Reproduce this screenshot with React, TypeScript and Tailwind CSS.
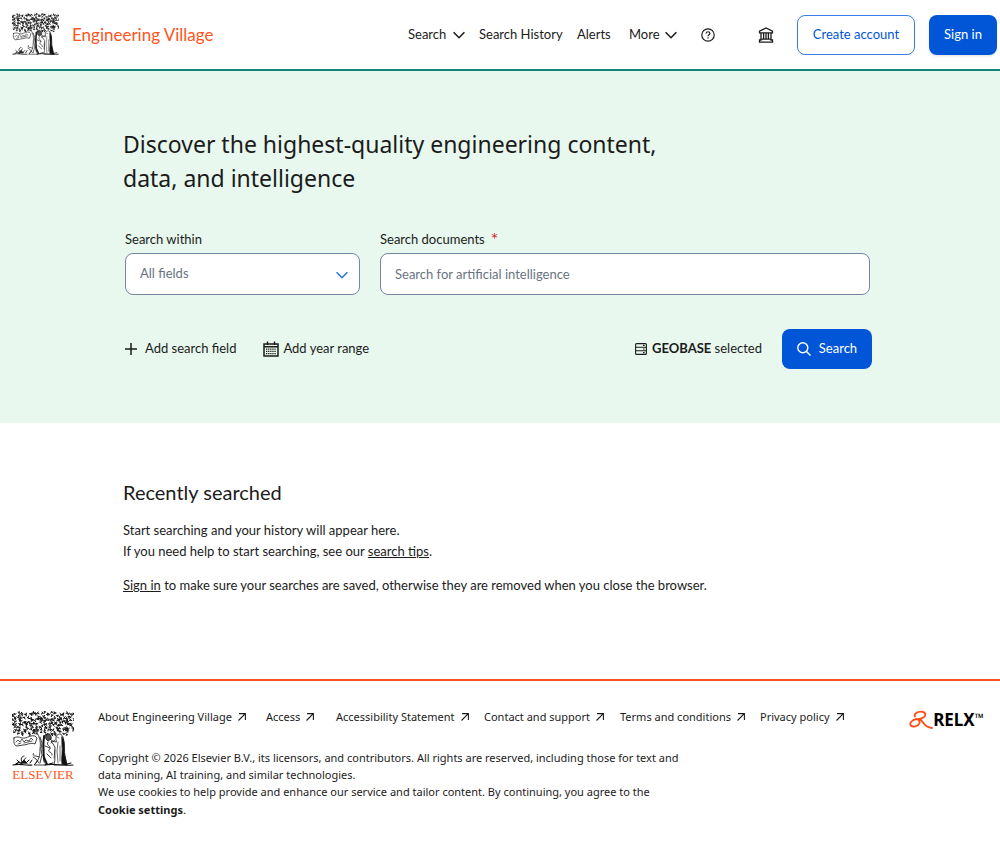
import type { ReactNode } from "react";

const footerLinks = [
  { label: "About Engineering Village", width: "w-[168px]" },
  { label: "Access", width: "w-[70px]" },
  { label: "Accessibility Statement", width: "w-[148px]" },
  { label: "Contact and support", width: "w-[136px]" },
  { label: "Terms and conditions", width: "w-[140px]" },
  { label: "Privacy policy", width: "w-[86px]" },
];

// small curled leaves scattered over the crown of the tree
function leafPath() {
  let seed = 7;
  const next = () => {
    seed = (seed * 16807) % 2147483647;
    return seed / 2147483647;
  };
  let d = "";
  for (let row = 0; row < 9; row++) {
    for (let col = 0; col < 20; col++) {
      const x = 1.5 + col * 3.1 + next() * 1.6 - 0.8;
      const y = 2.5 + row * 2.5 + next() * 1.6 - 0.8;
      if (row > 7 && (col > 17 || col < 2)) continue;
      const a = next() * Math.PI * 2;
      const dx = Math.cos(a) * 1.8;
      const dy = Math.sin(a) * 1.8;
      d += `M${x.toFixed(1)} ${y.toFixed(1)}q${(dx + dy).toFixed(1)} ${(dy - dx).toFixed(1)} ${dx.toFixed(1)} ${dy.toFixed(1)}t${(dy * 0.8).toFixed(1)} ${(-dx * 0.8).toFixed(1)}`;
    }
  }
  return d;
}

const leaves = leafPath();

function Tree({ className }: { className: string }) {
  return (
    <svg viewBox="0 0 62 56" className={className} fill="none" stroke="#111" strokeLinecap="round" aria-hidden="true">
      <path d={leaves} strokeWidth="1" />
      {/* banner */}
      <path d="M2 27c4-3 7 1 11 0s6-3 10-2l2 2-2 6c-4-2-8 1-12 1l-6 1c-4-1-3-5-3-8Z" fill="#fff" strokeWidth="0.8" />
      <path d="M4 31l2-2 2 2 2-3 2 3 2-2 3 1 2-3 2 2M6 33l3-1M12 32l8-2" strokeWidth="0.7" />
      {/* trunk and vine */}
      <path d="M25 22c3 5 4 9 3 16 0 6-1 12-6 16h12c-2-4-3-8-2-14 0-7-1-12 2-18" fill="#fff" strokeWidth="0.8" />
      <path d="M28 26l2 6-1 6 1 6-2 8M31 44l1 7M22 43c-2-2-1 3 2 2l3 1M21 46l3 2 3 4M25 50l-2 3" strokeWidth="0.8" />
      <path d="M32 25c-1 8-1 15 0 21l3 7" strokeWidth="1.8" />
      <path d="M34 24c3-3 6 0 5 4l-3 2c-2-1-3-3-2-6Z" fill="#555" strokeWidth="0.8" />
      <path d="M36 31c-3 4 5 4 1 8-2 2 4 2 3 5M33 35l5 2M38 28l4 3M39 32l4-3M35 43l4 4" strokeWidth="0.8" />
      {/* old man in his robe */}
      <path d="M44 28c-1-5 5-7 7-2 2 6 1 14 2 20l2 8H42c2-7 0-12 1-18l-4-6 5 1Z" fill="#fff" strokeWidth="0.8" />
      <path d="M50 26c3 4 2 10 2 15l3 13-5-1c-1-6 1-13 0-19Z" fill="#111" strokeWidth="0.8" />
      <path d="M46 31l-1 9 1 12M48 35v15M43 39l-1 8M45 26l2 1" strokeWidth="0.6" />
      {/* ground and shrubs */}
      <path d="M1 54c7-2 12 1 19 0M33 54c8-2 16 1 28 0M4 53l3-2 3 2M55 53l4-1M37 53l4-1" strokeWidth="1.1" />
      <path d="M10 51c-2-3 0-6 2-6M12 51c-1-3 1-3 2-4M7 51l-2-2M14 52l3-3M18 52l2-3" strokeWidth="1" />
      <path d="M9 52l3-3 3 3Z" fill="#111" strokeWidth="0.8" />
    </svg>
  );
}

function Chevron({ className }: { className: string }) {
  return (
    <svg viewBox="0 0 12 12" className={className} fill="none" stroke="currentColor" strokeWidth="1.6" aria-hidden="true">
      <path d="M.6 3.3 6 8.7l5.4-5.4" />
    </svg>
  );
}

function ArrowOut() {
  return (
    <svg viewBox="0 0 8 8" className="size-2 shrink-0" fill="none" stroke="currentColor" strokeWidth="1.1" aria-hidden="true">
      <path d="M.5 7.5l6.8-6.8M1 .6h6.4V7" />
    </svg>
  );
}

function HelpIcon() {
  return (
    <svg viewBox="0 0 14 14" className="size-3.5" fill="none" stroke="currentColor" strokeWidth="1.2" aria-hidden="true">
      <circle cx="7" cy="7" r="6.2" />
      <path d="M5.2 5.5c0-2.4 3.7-2.3 3.7 0C8.9 6.9 7 6.8 7 8.3M7 9.3v1.3" />
    </svg>
  );
}

function InstitutionIcon() {
  return (
    <svg viewBox="0 0 16 16" className="size-4" fill="none" stroke="currentColor" strokeWidth="1.3" aria-hidden="true">
      <path d="M1.5 5.8V4.2L8 1l6.5 3.2v1.6ZM3 6v6.5M5.6 6v6.5M8 6v6.5M10.4 6v6.5M13 6v6.5M1.5 15.2V13H3v-.8h10v.8h1.5v2.2Z" />
    </svg>
  );
}

function CalendarIcon() {
  return (
    <svg viewBox="0 0 16 16" className="size-4" fill="none" stroke="currentColor" aria-hidden="true">
      <path d="M1 3h14v12H1ZM1 5.8h14" strokeWidth="1.5" />
      <path d="M4.5 .5v3.5M11.5 .5v3.5" strokeWidth="1.5" />
      <path d="M3 8.2h10M3 10.4h10M3 12.6h10" strokeWidth="1.3" strokeDasharray="1.3 .8" />
    </svg>
  );
}

function DatabaseIcon() {
  return (
    <svg viewBox="0 0 12 12" className="size-3" fill="none" stroke="currentColor" strokeWidth="1.1" aria-hidden="true">
      <rect x=".6" y=".6" width="10.8" height="10.8" rx="1" />
      <path d="M.6 4.2h10.8M.6 7.8h10.8M8 2.4h1.6M8 6h1.6M8 9.6h1.6" />
    </svg>
  );
}

function RelxLogo() {
  return (
    <a href="#" aria-label="RELX" className="mt-0.5 flex items-center text-black">
      <svg viewBox="0 0 24 20" className="h-5 w-6" fill="none" stroke="#ff4a14" strokeWidth="1.8" strokeLinecap="round" aria-hidden="true">
        <path d="M6 6.500C4.500 4 8 1.700 12 1.700c5 0 5.500 4 2.500 5.800-2 1.300-4.500 1.700-7 1.500C3.500 9.500 0 13 1.800 15.500c2 2 7.500 1 8.700-2.500.5-1.800-.8-3.200-3-4" />
        <path d="M10 9c5 1 3.500 8.500 13 9" />
      </svg>
      <span className="font-['Noto_Sans',sans-serif] text-[17px] leading-5 font-bold">RELX</span>
      <span className="self-start text-xs leading-4 font-bold">™</span>
    </a>
  );
}

function NavButton({ children }: { children: ReactNode }) {
  return (
    <button type="button" className="flex items-center justify-between">
      {children}
      <Chevron className="size-3" />
    </button>
  );
}

function Header() {
  return (
    <header className="flex h-[71px] items-center border-b-2 border-[#168474] pr-[3px] pl-3 whitespace-nowrap">
      <a href="#" className="flex items-center gap-[13px] text-[17px] text-[#ff5420]">
        <Tree className="h-[43px] w-[47px]" />
        Engineering Village
      </a>
      <nav className="ml-auto flex items-center text-[13px]">
        <div className="grid w-[71px] pr-3.5"><NavButton>Search</NavButton></div>
        <a href="#" className="w-[98px]">Search History</a>
        <a href="#" className="w-[52px]">Alerts</a>
        <div className="grid w-[72px] pr-6"><NavButton>More</NavButton></div>
      </nav>
      <button type="button" aria-label="Help"><HelpIcon /></button>
      <button type="button" aria-label="Institution" className="mr-[23px] ml-[43px]"><InstitutionIcon /></button>
      <button type="button" className="h-10 w-[118px] rounded-lg border border-[#3a7de8] text-[13px] text-[#0056d6]">
        Create account
      </button>
      <button type="button" className="ml-3.5 h-10 w-[68px] rounded-lg bg-[#0056d6] text-[13px] text-white shadow">
        Sign in
      </button>
    </header>
  );
}

function Hero() {
  return (
    <section className="bg-[#e8f8ee] pt-14 pb-[54px]">
      <div className="mx-auto max-w-[754px]">
        <h1 className="font-['Noto_Sans',sans-serif] text-[23px] leading-[34px]">
          Discover the highest-quality engineering content,
          <br />
          data, and intelligence
        </h1>
        <form className="mt-8 pr-[5px] pl-0.5" onSubmit={(e) => e.preventDefault()}>
          <div className="flex gap-5 pr-0.5">
            <div className="w-[235px]">
              <label htmlFor="field" className="flex h-6 text-[13px] leading-6">Search within</label>
              <div className="relative mt-0.5">
                <select id="field" className="h-[42px] w-full appearance-none rounded-lg border border-[#7587a0] bg-white px-3.5 text-[13px] text-[#68737f]">
                  <option>All fields</option>
                </select>
                <Chevron className="pointer-events-none absolute top-4 right-3 size-3 text-[#2876e8]" />
              </div>
            </div>
            <div className="flex-1">
              <label htmlFor="query" className="flex h-6 gap-1.5 text-[13px] leading-6">
                Search documents <span className="text-lg leading-6 text-[#d42b38]">*</span>
              </label>
              <input id="query" type="text" placeholder="Search for artificial intelligence" className="mt-0.5 block h-[42px] w-full rounded-lg border border-[#7587a0] bg-white px-3.5 text-[13px] placeholder:text-[#68737f]" />
            </div>
          </div>
          <div className="mt-[34px] flex items-center text-[13px]">
            <button type="button" className="flex items-center gap-2">
              <svg viewBox="0 0 12 12" className="size-3" stroke="currentColor" strokeWidth="1.5" aria-hidden="true">
                <path d="M6 0v12M0 6h12" />
              </svg>
              Add search field
            </button>
            <button type="button" className="ml-[27px] flex items-center gap-1">
              <CalendarIcon />
              Add year range
            </button>
            <button type="button" className="ml-auto flex items-center gap-[5px]">
              <DatabaseIcon />
              <span><b>GEOBASE</b> selected</span>
            </button>
            <button type="submit" className="ml-5 flex h-10 w-[90px] items-center justify-center gap-2 rounded-lg bg-[#0056d6] text-white">
              <svg viewBox="0 0 14 14" className="size-3.5" fill="none" stroke="currentColor" strokeWidth="1.4" aria-hidden="true">
                <circle cx="5.8" cy="5.8" r="5" />
                <path d="M9.5 9.5 13.5 13.5" />
              </svg>
              Search
            </button>
          </div>
        </form>
      </div>
    </section>
  );
}

function Recent() {
  return (
    <main className="mx-auto max-w-[754px] pt-[55px] pb-[83px] text-[13px] leading-[21px]">
      <h2 className="text-xl leading-7">Recently searched</h2>
      <p className="mt-3.5">
        Start searching and your history will appear here.
        <br />
        If you need help to start searching, see our <a href="#" className="underline">search tips</a>.
      </p>
      <p className="mt-[13px]">
        <a href="#" className="underline">Sign in</a> to make sure your searches are saved, otherwise they are removed when you close the browser.
      </p>
    </main>
  );
}

function Footer() {
  return (
    <footer className="flex items-start border-t-2 border-[#ff5420] pt-[27px] pr-4 pb-6 pl-3 font-['Noto_Sans',sans-serif] text-[11px]">
      <a href="#" className="mt-[3px] w-[62px] text-center font-['Liberation_Serif',serif] text-[13px] leading-4 text-[#ff5420]">
        <Tree className="h-14 w-full" />
        ELSEVIER
      </a>
      <div className="ml-6 flex-1">
        <ul className="flex leading-[18px] whitespace-nowrap">
          {footerLinks.map((link) => (
            <li key={link.label} className={link.width}>
              <a href="#" className="inline-flex items-center gap-1.5">
                {link.label}
                <ArrowOut />
              </a>
            </li>
          ))}
        </ul>
        <p className="mt-[23px] leading-[17px]">
          Copyright © 2026 Elsevier B.V., its licensors, and contributors. All rights are reserved, including those for text and
          <br />
          data mining, AI training, and similar technologies.
          <br />
          We use cookies to help provide and enhance our service and tailor content. By continuing, you agree to the
        </p>
        <p className="leading-5"><button type="button" className="font-bold">Cookie settings</button>.</p>
      </div>
      <RelxLogo />
    </footer>
  );
}

export default function App() {
  return (
    <div className="min-h-screen bg-white font-['Lato',sans-serif] text-[#1b1b1b]">
      <Header />
      <Hero />
      <Recent />
      <Footer />
    </div>
  );
}
